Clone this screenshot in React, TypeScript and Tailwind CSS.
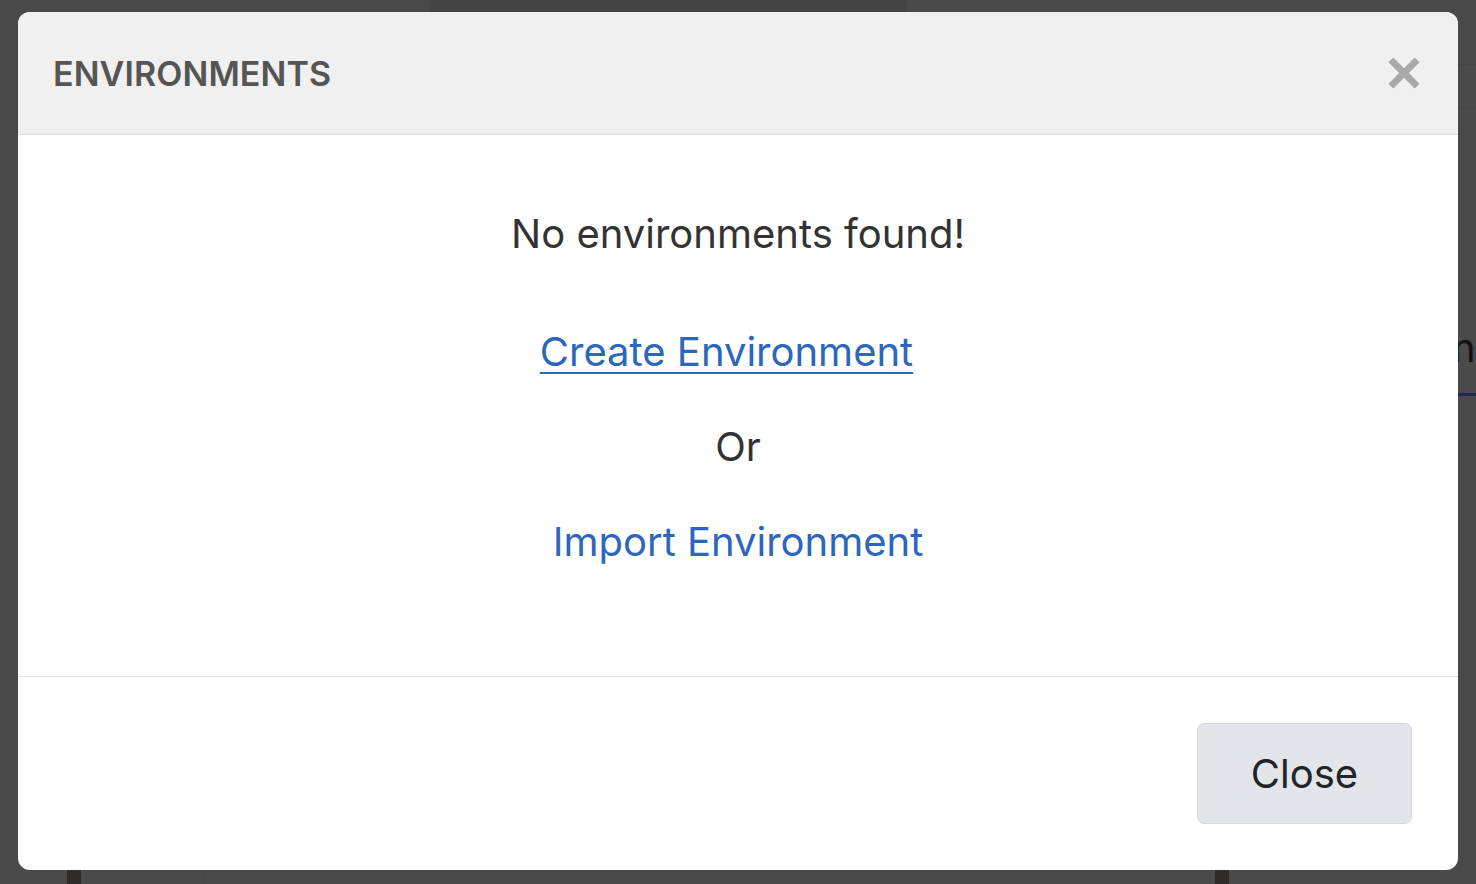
import React from 'react';

const CloseIcon = () => (
    <svg viewBox="0 0 30 30" className="w-[32px] h-[32px]" aria-hidden="true">
        <path d="M5 5 L25 25 M25 5 L5 25" stroke="#a9a9a9" strokeWidth="6.5" strokeLinecap="square" />
    </svg>
);

// the app behind the dimmed overlay, only a few pieces show through
const Backdrop = () => (
    <div className="w-[1476px] h-[884px] bg-[#4a4a4a] flex flex-col">
        <div className="h-[12px] flex">
            <div className="w-[430px] bg-[#494949]" />
            <div className="w-[477px] bg-[#444444]" />
            <div className="flex-1 bg-[#4a4a4a]" />
        </div>
        <div className="flex-1 flex justify-end">
            <div className="w-[18px] flex flex-col">
                <div className="h-[53px] border-b border-[#454545]" />
                <div className="h-[43px] border-b border-[#454545]" />
                <div className="h-[220px]" />
                <div className="h-[40px] text-[40px] leading-[40px] text-[#111] overflow-hidden font-['Inter',sans-serif] -ml-[6px]">n</div>
                <div className="h-[25px]" />
                <div className="h-[3px] bg-[#1f2a5c]" />
            </div>
        </div>
        <div className="h-[14px] flex">
            <div className="w-[67px]" />
            <div className="w-[14px] bg-[#2d2c2b]" />
            <div className="w-[123px] border-r border-[#444]" />
            <div className="w-[1011px]" />
            <div className="w-[14px] bg-[#2d2c2b]" />
            <div className="flex-1" />
        </div>
    </div>
);

export default function App() {
    return (
        <div className="relative w-[1476px] h-[884px] overflow-hidden font-['Inter','Noto_Sans',sans-serif]">
            <Backdrop />
            <div className="absolute top-[12px] left-[18px] w-[1440px] h-[858px] bg-white rounded-[12px] overflow-hidden flex flex-col">
                <div className="h-[123px] bg-[#f0f0f0] border-b border-[#dedede] flex items-center justify-between pl-[35px] pr-[38px]">
                    <h2 className="text-[34px] font-semibold tracking-[0.1px] text-[#555555]">ENVIRONMENTS</h2>
                    <button className="flex items-center justify-center">
                        <CloseIcon />
                    </button>
                </div>
                <div className="flex-1 flex flex-col items-center pt-[75px] text-[40px] leading-[48px] text-[#333333]">
                    <p>No environments found!</p>
                    <a href="#" className="mt-[70px] mr-[23px] text-[#2c66bd] underline decoration-[2px] underline-offset-[6px]">Create Environment</a>
                    <p className="mt-[47px]">Or</p>
                    <a href="#" className="mt-[47px] text-[#2c66bd]">Import Environment</a>
                </div>
                <div className="h-[194px] border-t border-[#e0e0e0] flex items-center justify-end pr-[46px]">
                    <button className="w-[215px] h-[101px] rounded-[7px] bg-[#e2e5e9] border border-[#d5d8dc] text-[40px] text-[#212529]">Close</button>
                </div>
            </div>
        </div>
    );
}
